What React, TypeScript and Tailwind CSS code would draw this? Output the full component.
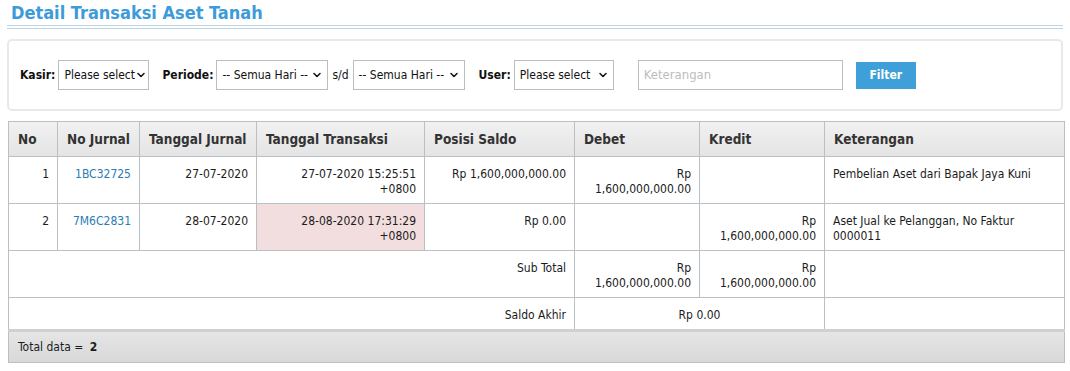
import { ChevronDown } from "lucide-react";

const font = { fontFamily: '"DejaVu Sans Condensed", "DejaVu Sans", Tahoma, sans-serif' };

type Row = {
  no: number;
  jurnal: string;
  tglJurnal: string;
  tglTransaksi: string[];
  highlight?: boolean;
  saldo: string;
  debet?: string[];
  kredit?: string[];
  ket: string[];
};

const rows: Row[] = [
  {
    no: 1,
    jurnal: "1BC32725",
    tglJurnal: "27-07-2020",
    tglTransaksi: ["27-07-2020 15:25:51", "+0800"],
    saldo: "Rp 1,600,000,000.00",
    debet: ["Rp", "1,600,000,000.00"],
    ket: ["Pembelian Aset dari Bapak Jaya Kuni"],
  },
  {
    no: 2,
    jurnal: "7M6C2831",
    tglJurnal: "28-07-2020",
    tglTransaksi: ["28-08-2020 17:31:29", "+0800"],
    highlight: true,
    saldo: "Rp 0.00",
    kredit: ["Rp", "1,600,000,000.00"],
    ket: ["Aset Jual ke Pelanggan, No Faktur", "0000011"],
  },
];

const Select = ({ label, width }: { label: string; width: string }) => (
  <div
    className={`${width} h-[30px] border border-[#bdbdbd] bg-white flex items-center justify-between pl-[5px] pr-[4px] text-[12px] text-[#111]`}
  >
    <span className="whitespace-nowrap">{label}</span>
    <ChevronDown className="w-[12px] h-[12px] shrink-0" strokeWidth={3} />
  </div>
);

const Lines = ({ lines }: { lines?: string[] }) =>
  lines ? (
    <>
      {lines.map((l, i) => (
        <div key={i}>{l}</div>
      ))}
    </>
  ) : null;

const th = "border border-[#b9c0c5] px-[9px] text-left font-bold text-[13.5px] text-[#333] h-[35px]";
const td = "border border-[#b9c0c5] px-[8px] pt-[10px] pb-[6px] align-top text-[12px] leading-[15px] text-[#1b1b1b]";

export default function App() {
  return (
    <div className="w-[1070px] h-[371px] bg-white overflow-hidden" style={font}>
      <div className="px-[7px] pt-[2px]">
        <h1 className="text-[18px] font-bold text-[#3d9bd9] pl-[4px] leading-[22px]">Detail Transaksi Aset Tanah</h1>
        <div className="mt-[1px] border-t border-[#bcd3e6] h-[4px] border-b" />

        <div className="mt-[10px] border-2 border-[#e9e9e9] rounded-[5px] h-[72px] flex items-center pl-[11px] text-[12px] text-[#111]">
          <span className="font-bold mr-[3px]">Kasir:</span>
          <Select label="Please select" width="w-[91px]" />
          <span className="font-bold ml-[13px] mr-[3px]">Periode:</span>
          <Select label="-- Semua Hari --" width="w-[112px]" />
          <span className="mx-[4px]">s/d</span>
          <Select label="-- Semua Hari --" width="w-[112px]" />
          <span className="font-bold ml-[14px] mr-[3px]">User:</span>
          <Select label="Please select" width="w-[100px]" />
          <div className="ml-[24px] w-[205px] h-[30px] border border-[#bdbdbd] flex items-center pl-[5px] text-[13px] text-[#bdbdbd]">
            Keterangan
          </div>
          <button className="ml-[13px] w-[60px] h-[27px] bg-[#3f9fd9] text-white font-bold text-[12px]">Filter</button>
        </div>

        <table className="mt-[10px] ml-[1px] w-[1056px] border-collapse table-fixed">
          <colgroup>
            <col className="w-[49px]" />
            <col className="w-[82px]" />
            <col className="w-[117px]" />
            <col className="w-[168px]" />
            <col className="w-[150px]" />
            <col className="w-[125px]" />
            <col className="w-[125px]" />
            <col className="w-[240px]" />
          </colgroup>
          <thead>
            <tr className="bg-gradient-to-b from-[#f1f1f1] to-[#e4e4e4]">
              <th className={th}>No</th>
              <th className={th}>No Jurnal</th>
              <th className={th}>Tanggal Jurnal</th>
              <th className={th}>Tanggal Transaksi</th>
              <th className={th}>Posisi Saldo</th>
              <th className={th}>Debet</th>
              <th className={th}>Kredit</th>
              <th className={th}>Keterangan</th>
            </tr>
          </thead>
          <tbody>
            {rows.map((r) => (
              <tr key={r.no} className="h-[47px]">
                <td className={`${td} text-right`}>{r.no}</td>
                <td className={`${td} text-right text-[#2b7bb5]`}>{r.jurnal}</td>
                <td className={`${td} text-right`}>{r.tglJurnal}</td>
                <td className={`${td} text-right ${r.highlight ? "bg-[#f2dede]" : ""}`}>
                  <Lines lines={r.tglTransaksi} />
                </td>
                <td className={`${td} text-right`}>{r.saldo}</td>
                <td className={`${td} text-right`}>
                  <Lines lines={r.debet} />
                </td>
                <td className={`${td} text-right`}>
                  <Lines lines={r.kredit} />
                </td>
                <td className={td}>
                  <Lines lines={r.ket} />
                </td>
              </tr>
            ))}
            <tr className="h-[47px]">
              <td colSpan={5} className={`${td} text-right`}>Sub Total</td>
              <td className={`${td} text-right`}>
                <Lines lines={["Rp", "1,600,000,000.00"]} />
              </td>
              <td className={`${td} text-right`}>
                <Lines lines={["Rp", "1,600,000,000.00"]} />
              </td>
              <td className={td} />
            </tr>
            <tr className="h-[33px]">
              <td colSpan={5} className={`${td} text-right`}>Saldo Akhir</td>
              <td colSpan={2} className={`${td} text-center`}>Rp 0.00</td>
              <td className={td} />
            </tr>
          </tbody>
          <tfoot>
            <tr className="h-[32px] bg-gradient-to-b from-[#e6e6e6] to-[#d8d8d8]">
              <td colSpan={8} className="border border-[#b9c0c5] border-t-[3px] border-t-[#d0d0d0] px-[9px] text-[12px] text-[#1b1b1b]">
                Total data = <b className="ml-[3px]">2</b>
              </td>
            </tr>
          </tfoot>
        </table>
      </div>
    </div>
  );
}
